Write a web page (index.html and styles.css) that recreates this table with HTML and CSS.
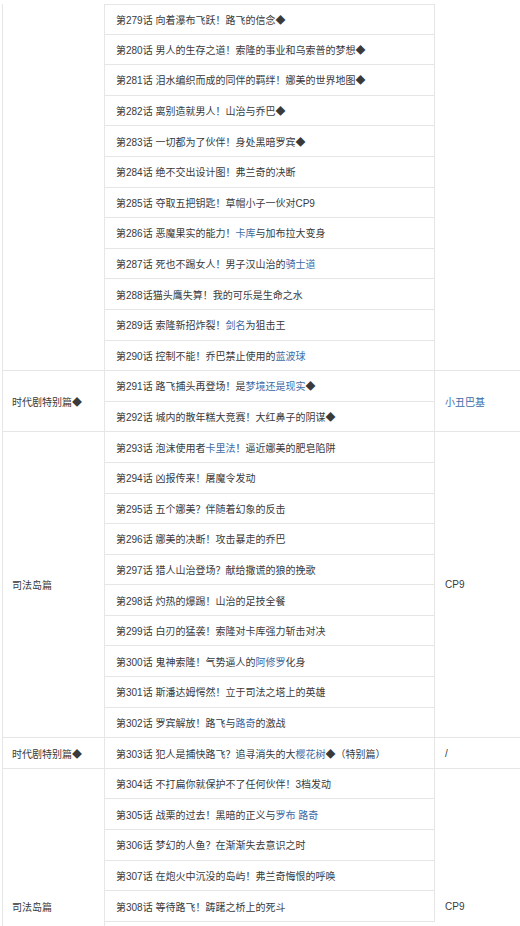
FILE: index.html
```html
<!DOCTYPE html>
<html lang="zh-CN">
<head>
<meta charset="utf-8">
<title>海贼王 剧集列表</title>
<link rel="stylesheet" href="styles.css">
</head>
<body>
<div class="page">
<div class="table">
  <div class="cell arc r1"></div>
  <div class="cell ep first">第279话 向着瀑布飞跃！路飞的信念◆</div>
  <div class="cell boss r1"></div>
  <div class="cell ep">第280话 男人的生存之道！索隆的事业和乌索普的梦想◆</div>
  <div class="cell ep">第281话 泪水编织而成的同伴的羁绊！娜美的世界地图◆</div>
  <div class="cell ep">第282话 离别造就男人！山治与乔巴◆</div>
  <div class="cell ep">第283话 一切都为了伙伴！身处黑暗罗宾◆</div>
  <div class="cell ep">第284话 绝不交出设计图！弗兰奇的决断</div>
  <div class="cell ep">第285话 夺取五把钥匙！草帽小子一伙对CP9</div>
  <div class="cell ep">第286话 恶魔果实的能力！<a class="link">卡库</a>与加布拉大变身</div>
  <div class="cell ep">第287话 死也不踢女人！男子汉山治的<a class="link">骑士道</a></div>
  <div class="cell ep">第288话猫头鹰失算！我的可乐是生命之水</div>
  <div class="cell ep">第289话 索隆新招炸裂！<a class="link">剑名</a>为狙击王</div>
  <div class="cell ep">第290话 控制不能！乔巴禁止使用的<a class="link">蓝波球</a></div>

  <div class="cell arc r13">时代剧特别篇◆</div>
  <div class="cell ep">第291话 路飞捕头再登场！是<a class="link">梦境还是现实</a>◆</div>
  <div class="cell boss r13"><a class="link">小丑巴基</a></div>
  <div class="cell ep">第292话 城内的散年糕大竞赛！大红鼻子的阴谋◆</div>

  <div class="cell arc r15">司法岛篇</div>
  <div class="cell ep">第293话 泡沫使用者<a class="link">卡里法</a>！逼近娜美的肥皂陷阱</div>
  <div class="cell boss r15">CP9</div>
  <div class="cell ep">第294话 凶报传来！屠魔令发动</div>
  <div class="cell ep">第295话 五个娜美？伴随着幻象的反击</div>
  <div class="cell ep">第296话 娜美的决断！攻击暴走的乔巴</div>
  <div class="cell ep">第297话 猎人山治登场？献给撒谎的狼的挽歌</div>
  <div class="cell ep">第298话 灼热的爆踢！山治的足技全餐</div>
  <div class="cell ep">第299话 白刃的猛袭！索隆对卡库强力斩击对决</div>
  <div class="cell ep">第300话 鬼神索隆！气势逼人的<a class="link">阿修罗</a>化身</div>
  <div class="cell ep">第301话 斯潘达姆愕然！立于司法之塔上的英雄</div>
  <div class="cell ep">第302话 罗宾解放！路飞与<a class="link">路奇</a>的激战</div>

  <div class="cell arc r25">时代剧特别篇◆</div>
  <div class="cell ep">第303话 犯人是捕快路飞？追寻消失的大<a class="link">樱花树</a>◆（特别篇）</div>
  <div class="cell boss r25">/</div>

  <div class="cell arc r26">司法岛篇</div>
  <div class="cell ep">第304话 不打扁你就保护不了任何伙伴！3档发动</div>
  <div class="cell boss r26">CP9</div>
  <div class="cell ep">第305话 战栗的过去！黑暗的正义与<a class="link">罗布 路奇</a></div>
  <div class="cell ep">第306话 梦幻的人鱼？在渐渐失去意识之时</div>
  <div class="cell ep">第307话 在炮火中沉没的岛屿！弗兰奇悔恨的呼唤</div>
  <div class="cell ep">第308话 等待路飞！踌躇之桥上的死斗</div>
</div>
</div>
</body>
</html>
```

FILE: styles.css
```css
html, body {
  margin: 0;
  padding: 0;
  background: #ffffff;
}

body {
  font-family: "Liberation Sans", "Noto Sans CJK SC", sans-serif;
  font-size: 10px;
  color: #3a3a3a;
}

.page {
  box-sizing: border-box;
  width: 520px;
  height: 926px;
  padding-top: 4px;
  overflow: hidden;
}

.table {
  margin-left: 2px;
  border-left: 1px solid #e6e6e6;
  display: grid;
  grid-template-columns: 102px 330px 85px;
  grid-auto-rows: 30.6px;
}

.cell {
  box-sizing: border-box;
  display: flex;
  align-items: center;
  border-right: 1px solid #e6e6e6;
  border-bottom: 1px solid #e6e6e6;
  white-space: nowrap;
  overflow: hidden;
}

.arc {
  grid-column: 1;
  padding-left: 9px;
}

.ep {
  grid-column: 2;
  padding-left: 11px;
}

.ep.first {
  border-top: 1px solid #e6e6e6;
}

.boss {
  grid-column: 3;
  padding-left: 10px;
  border-right: none;
}

.r1 { grid-row: 1 / span 12; }
.r13 { grid-row: 13 / span 2; }
.r15 { grid-row: 15 / span 10; }
.r25 { grid-row: 25 / span 1; }
.r26 { grid-row: 26 / span 9; }

.link {
  color: #3d6ba6;
  text-decoration: none;
}
```
